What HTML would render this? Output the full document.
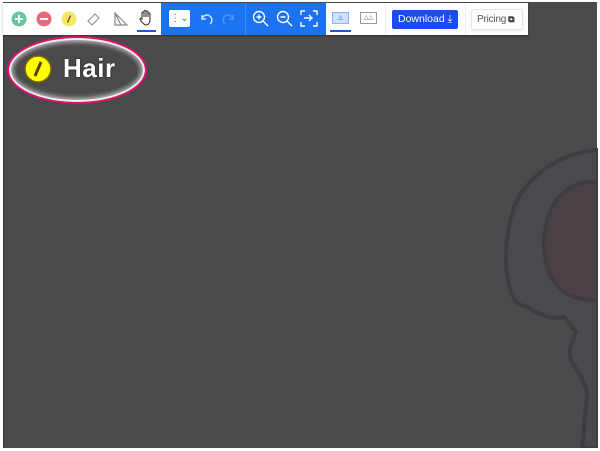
<!DOCTYPE html>
<html><head><meta charset="utf-8"><style>
*{margin:0;padding:0;box-sizing:border-box}
body{width:600px;height:451px;background:#fff;position:relative;overflow:hidden;font-family:"Liberation Sans",sans-serif}
#canvas{position:absolute;left:3px;top:2px;width:594px;height:446px;background:#4a4a4a;border-left:1px solid #333;}
#tb{position:absolute;left:3px;top:3px;width:525px;height:32px;background:#fff;box-shadow:0 1px 2px rgba(0,0,0,.3)}
#blue{position:absolute;left:158px;top:0;width:165px;height:32px;background:#1a73f0}
.ic{position:absolute}
</style></head><body>
<div id="canvas">
<svg width="594" height="446" style="position:absolute;left:0;top:0">
<path d="M594 148 C560 150 525 170 510 205 C498 245 500 280 512 300 C518 305 522 303 528 308 C535 312 548 318 560 315 L572 330 C568 340 563 350 568 360 C575 372 583 382 583 395 C581 410 580 430 578 446 L594 446 Z" fill="#4a494d" stroke="#3e3d42" stroke-width="4"/>
<path d="M594 180 C562 178 542 200 540 240 C540 280 560 300 594 298 Z" fill="#4b4044" stroke="#3e3d42" stroke-width="4"/>
</svg>
</div>
<div id="tb">
<svg class="ic" style="left:8px;top:8px" width="16" height="16"><circle cx="8" cy="8" r="7.5" fill="#6cc596"/><path d="M8 4v8M4 8h8" stroke="#fff" stroke-width="2"/></svg>
<svg class="ic" style="left:33px;top:8px" width="16" height="16"><circle cx="8" cy="8" r="7.5" fill="#e56b7e"/><path d="M4 8h8" stroke="#fff" stroke-width="2"/></svg>
<svg class="ic" style="left:58px;top:8px" width="16" height="16"><circle cx="8" cy="8" r="7.5" fill="#f5e76a"/><path d="M9.5 4.5L6.5 11.5" stroke="#7a6020" stroke-width="1.5"/></svg>
<svg class="ic" style="left:83px;top:8px" width="16" height="16"><path d="M2 10l7-7 4 4-7 7z" fill="none" stroke="#999" stroke-width="1.2"/></svg>
<svg class="ic" style="left:110px;top:8px" width="16" height="16"><path d="M2 2l12 12H2z M2 2l6 12" fill="none" stroke="#888" stroke-width="1.2"/></svg>
<svg class="ic" style="left:135px;top:6px" width="16" height="18"><path d="M4 9V4a1 1 0 012 0v4V2.5a1 1 0 012 0V8V3a1 1 0 012 0v5V5a1 1 0 012 0v6c0 3-2 5-4 5H8c-2 0-3-2-5-4l-1-2c0-1 1-1 2 0z" fill="none" stroke="#333" stroke-width="1.1"/></svg>
<div style="position:absolute;left:134px;top:27px;width:19px;height:2px;background:#1a56db"></div>
<div id="blue">
<div style="position:absolute;left:8px;top:7px;width:21px;height:17px;background:#fff;border-radius:2px;font-size:10px;color:#1a73f0;text-align:center;line-height:17px">⋮⌄</div>
<svg class="ic" style="left:37px;top:8px" width="16" height="16"><path d="M4 4v4h4M4 8a5 5 0 118 5" fill="none" stroke="#cfe0ff" stroke-width="1.5"/></svg>
<svg class="ic" style="left:60px;top:8px" width="16" height="16"><path d="M12 4v4H8M12 8a5 5 0 10-8 5" fill="none" stroke="#4f92f5" stroke-width="1.5"/></svg>
<div style="position:absolute;left:84px;top:0;width:1px;height:32px;background:#3d8af5"></div>
<svg class="ic" style="left:91px;top:7px" width="17" height="17"><circle cx="7" cy="7" r="5.5" fill="none" stroke="#fff" stroke-width="1.4"/><path d="M11 11l5 5M4.5 7h5M7 4.5v5" stroke="#fff" stroke-width="1.4"/></svg>
<svg class="ic" style="left:115px;top:7px" width="17" height="17"><circle cx="7" cy="7" r="5.5" fill="none" stroke="#fff" stroke-width="1.4"/><path d="M11 11l5 5M4.5 7h5" stroke="#fff" stroke-width="1.4"/></svg>
<svg class="ic" style="left:139px;top:7px" width="18" height="17"><path d="M1 5V1h4M13 1h4v4M17 12v4h-4M5 16H1v-4M4 8h8M9 5l3 3-3 3" fill="none" stroke="#fff" stroke-width="1.4"/></svg>
</div>
<div style="position:absolute;left:329px;top:9px;width:17px;height:12px;background:#cfe1ff;border:1px solid #8ab4f0;font-size:6px;color:#1a56db;text-align:center;line-height:10px">△</div>
<div style="position:absolute;left:327px;top:27px;width:21px;height:2px;background:#1a56db"></div>
<div style="position:absolute;left:357px;top:9px;width:17px;height:12px;border:1px solid #999;font-size:6px;color:#666;text-align:center;line-height:10px">△△</div>
<div style="position:absolute;left:382px;top:0;width:1px;height:32px;background:#eee"></div>
<div style="position:absolute;left:389px;top:7px;width:66px;height:19px;background:#1a4cf0;border-radius:2px;color:#fff;font-size:10.5px;line-height:19px;padding-left:6px">Download ⤓</div>
<div style="position:absolute;left:462px;top:0;width:1px;height:32px;background:#eee"></div>
<div style="position:absolute;left:468px;top:6px;width:52px;height:21px;border:1px solid #e3e3e3;border-radius:3px;color:#555;font-size:10px;line-height:19px;padding-left:5px;white-space:nowrap;box-shadow:0 1px 2px rgba(0,0,0,.1);letter-spacing:-0.2px">Pricing<b style="color:#222;font-size:9px;margin-left:2px">⧉</b></div>
</div>
<div style="position:absolute;left:7px;top:36px;width:140px;height:68px;border-radius:50%;border:2px solid #e0106e;box-shadow:inset 0 0 0 2px #eee, inset 0 0 5px 4px #bbb;background:#4a4a4a"></div>
<svg class="ic" style="left:23px;top:54px" width="30" height="30"><circle cx="15" cy="15" r="13" fill="#ffff00" stroke="#806000" stroke-width="1.5"/><path d="M18 8L12 22" stroke="#5a4010" stroke-width="3"/></svg>
<div style="position:absolute;left:63px;top:53px;font-size:26px;font-weight:bold;color:#fff;letter-spacing:0.5px;text-shadow:0 0 2px #222,0 0 1px #222">Hair</div>
</body></html>
